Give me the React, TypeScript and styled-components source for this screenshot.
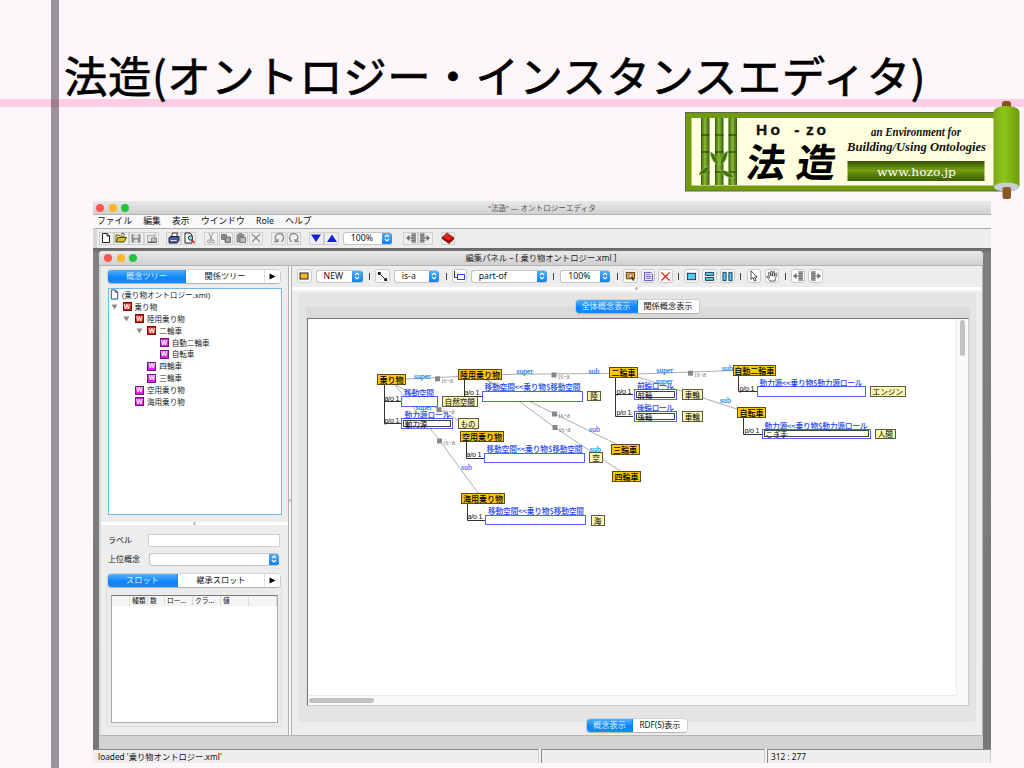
import React from "react";
import styled, { createGlobalStyle, css } from "styled-components";

const ui = `"Noto Sans", "Noto Sans CJK JP", sans-serif`;
const jp = `"Noto Sans CJK JP", sans-serif`;

const Global = createGlobalStyle`
  *, *::before, *::after { box-sizing: border-box; }
  body { margin: 0; background: #fdf6fb; font-family: ${ui}; color: #111; }
  svg { display: block; }
`;

const Slide = styled.main`
  position: relative;
  width: 1024px;
  height: 768px;
  overflow: hidden;
  padding: 44px 0 0 64px;
  background:
    linear-gradient(90deg, transparent 51px, rgba(60, 50, 58, 0.5) 51px, rgba(60, 50, 58, 0.5) 59px, transparent 59px),
    linear-gradient(180deg, transparent 99px, #ffcce6 99px, #ffcce6 107px, transparent 107px),
    #fdf6fb;
`;
const Title = styled.h1`
  margin: 0;
  height: 64px;
  font: 400 43.4px/60px ${jp};
  letter-spacing: 0.62px;
  white-space: nowrap;
  color: #000;
  -webkit-text-stroke: 0.7px #000;
`;
const Banner = styled.div`
  position: absolute;
  left: 684px;
  top: 99px;
`;

/* ---------- outer window ---------- */
const AppWindow = styled.section`
  width: 898px;
  height: 562px;
  margin: 93px 0 0 29px;
  display: flex;
  flex-direction: column;
  background: #eee;
`;
const TitleBar = styled.header<{ $h: number; $inner?: boolean }>`
  height: ${(p) => p.$h}px;
  flex: none;
  display: grid;
  grid-template-columns: 60px 1fr 60px;
  align-items: center;
  padding: 0 ${(p) => (p.$inner ? 5 : 3)}px;
  font: ${(p) => (p.$inner ? 8.3 : 7.6)}px/12px ${ui};
  color: ${(p) => (p.$inner ? "#222" : "#555")};
  text-align: center;
  white-space: nowrap;
  background: linear-gradient(#e9e9e9, #d0d0d0);
  border-bottom: 1px solid #b3b3b3;
`;
const Lights = styled.div`
  display: flex;
  gap: 4.6px;
`;
const Light = styled.i<{ $c: string }>`
  width: 8px;
  height: 8px;
  border-radius: 50%;
  background: ${(p) => p.$c};
`;
const MenuBar = styled.nav`
  height: 13px;
  flex: none;
  display: flex;
  gap: 11.3px;
  padding-left: 4px;
  font: 8.75px/13px ${ui};
  background: #f9f9f9;
  white-space: nowrap;
`;
const MainTools = styled.div`
  height: 20px;
  flex: none;
  display: flex;
  align-items: center;
  padding: 0 0 1px 2px;
  background: #ededed;
  border-top: 1px solid #aaa;
  border-left: 4px solid #d6d6d6;
`;
const Desktop = styled.div`
  flex: 1;
  min-height: 0;
  padding: 3px 8px 0 6px;
  background: linear-gradient(#666, #808080 5px, #777);
`;
const StatusBar = styled.footer`
  height: 14px;
  flex: none;
  display: grid;
  grid-template-columns: 446px 224px 1fr;
  gap: 2px;
  background: #f3f1f2;
`;
const StatusCell = styled.div<{ $line?: boolean }>`
  padding-left: ${(p) => (p.$line ? 3 : 5)}px;
  font: 8.3px/13px ${ui};
  background: #eee;
  border-top: 1px solid #888;
  border-left: ${(p) => (p.$line ? "1px solid #888" : "none")};
  border-right: 1px solid #ccc;
  white-space: nowrap;
`;

/* ---------- controls ---------- */
const ToolButton = styled.span<{ $ml?: number; $flat?: boolean }>`
  width: 14.6px;
  height: ${(p) => (p.$flat ? 13 : 14)}px;
  margin-left: ${(p) => p.$ml || 0}px;
  flex: none;
  display: flex;
  align-items: center;
  justify-content: center;
  ${(p) =>
    p.$flat
      ? css`
          background: #eee;
          border: 1px solid #cfcfcf;
        `
      : css`
          background: #fbfbfb;
          border: 1px solid #cbcbcb;
          border-radius: 3px;
        `}
`;
const SelectBox = styled.span<{ $w: number; $ml?: number; $pad?: number }>`
  width: ${(p) => p.$w}px;
  height: 13px;
  margin-left: ${(p) => p.$ml || 0}px;
  flex: none;
  display: flex;
  align-items: stretch;
  justify-content: space-between;
  padding-left: ${(p) => p.$pad ?? 7}px;
  overflow: hidden;
  font: 8.7px/11px ${ui};
  background: #fff;
  border: 1px solid #c4c4c4;
  border-right: 0;
  border-radius: 3px;
  white-space: nowrap;
`;
const Stepper = styled.span`
  width: 10.5px;
  margin: -1px 0;
  display: flex;
  align-items: center;
  justify-content: center;
  background: linear-gradient(#58b0fc, #0a7dfa);
`;
const Divider = styled.i<{ $ml: number }>`
  width: 1px;
  height: 7px;
  margin-left: ${(p) => p.$ml}px;
  background: #444;
`;
const Tabs = styled.div<{ $w: number }>`
  width: ${(p) => p.$w}px;
  height: 13px;
  flex: none;
  display: flex;
  overflow: hidden;
  background: #fff;
  border-radius: 3px;
  box-shadow: 0 0 0 0.6px #bbb, 0 1px 1px #aaa;
`;
const Tab = styled.span<{ $w: number; $on?: boolean; $fs?: number }>`
  width: ${(p) => p.$w}px;
  flex: none;
  display: flex;
  align-items: center;
  justify-content: center;
  font: ${(p) => p.$fs || 8.2}px/12px ${ui};
  padding-bottom: 1px;
  color: ${(p) => (p.$on ? "#d9efff" : "#111")};
  background: ${(p) => (p.$on ? "linear-gradient(#53b2fb, #0a84fd 60%, #168dff)" : "#fff")};
  border-right: 1px solid ${(p) => (p.$on ? "#0a84fd" : "#ddd")};
  white-space: nowrap;
  &:last-child { border-right: 0; }
`;

/* ---------- inner window ---------- */
const InnerWindow = styled.section`
  height: 498px;
  display: flex;
  flex-direction: column;
  border-radius: 4px 4px 0 0;
  overflow: hidden;
  background: #d2d2d2;
`;
const Body = styled.div`
  height: 470px;
  display: flex;
  background: #ededed;
  border: 1px solid #b5b5b5;
  border-top: 0;
  border-left: 2px solid #d9d9d9;
`;
const Side = styled.aside`
  width: 187px;
  flex: none;
  display: flex;
  flex-direction: column;
  padding: 4px 6px 0 7px;
`;
const Splitter = styled.div`
  width: 4px;
  flex: none;
  display: flex;
  align-items: center;
  border-left: 1px solid #b0b0b0;
  border-right: 1px solid #b0b0b0;
  background: #fafafa;
`;
const Grip = styled.i`
  width: 3px;
  height: 3px;
  border-radius: 50%;
  background: #bbb;
`;
const Tree = styled.ul`
  width: 174px;
  height: 227px;
  margin: 5px 0 0 0;
  padding: 0;
  list-style: none;
  background: #fff;
  border: 1px solid #6ebaf0;
  flex: none;
`;
const TreeRow = styled.li<{ $depth: number }>`
  height: 11.9px;
  padding-left: ${(p) => p.$depth * 12.4}px;
  display: flex;
  align-items: center;
  font: 7.6px/12px ${ui};
  white-space: nowrap;
  color: #222;
`;
const Twisty = styled.span`
  width: 13.5px;
  padding-left: 2px;
  color: #888;
`;
const Badge = styled.span<{ $leaf?: boolean }>`
  width: 9px;
  height: 9px;
  margin-right: 3px;
  display: flex;
  align-items: center;
  justify-content: center;
  font: 700 6.5px/8px ${ui};
  color: #fff;
  background: ${(p) => (p.$leaf ? "#e022e8" : "#ec1c0c")};
  border: 1px solid ${(p) => (p.$leaf ? "#701878" : "#701008")};
`;
const SideRule = styled.div`
  height: 3px;
  margin: 7px -6px 0 -7px;
  display: flex;
  justify-content: center;
  align-items: center;
  flex: none;
  background: #fff;
`;
const Field = styled.label<{ $mt: number }>`
  height: 14px;
  margin-top: ${(p) => p.$mt}px;
  flex: none;
  display: flex;
  align-items: center;
  font: 8px/14px ${ui};
`;
const FieldName = styled.span`
  width: 40px;
  white-space: nowrap;
`;
const TextInput = styled.span`
  width: 132px;
  height: 13px;
  background: #fff;
  border: 1px solid #d0d0d0;
`;
const GroupBox = styled.div`
  width: 176px;
  height: 144px;
  margin: -4px 0 0 -2px;
  padding: 11px 3px 0 4px;
  border: 1px solid #dedede;
  border-radius: 3px;
  background: #ebebeb;
`;
const SlotTabs = styled.div`
  position: relative;
  z-index: 1;
  margin-top: 8px;
`;
const SlotTable = styled.div`
  width: 167px;
  height: 128px;
  background: #fff;
  border: 1px solid #aaa;
  border-top-color: #777;
`;
const SlotHead = styled.div`
  height: 10px;
  display: grid;
  grid-template-columns: 18px 18px 17px 28px 28px 28px 1fr;
  background: #f5f5f5;
  font: 6.8px/10px ${ui};
`;
const HeadCell = styled.span`
  padding-left: 2px;
  border-right: 1px solid #ddd;
  white-space: nowrap;
  overflow: hidden;
`;

const Work = styled.div`
  flex: 1;
  min-width: 0;
  display: flex;
  flex-direction: column;
`;
const PanelTools = styled.div`
  height: 21px;
  flex: none;
  display: flex;
  align-items: center;
  padding: 0 0 1px 5px;
`;
const WhiteRule = styled.div`
  height: 4px;
  margin-top: 0;
  flex: none;
  background: linear-gradient(#fff 2px, #f6f6f6);
  display: flex;
  padding-left: 343px;
`;
const Outer = styled.div`
  height: 429px;
  flex: none;
  margin: 2px 6px 0 6px;
  padding: 7px 6px 0 8px;
  display: flex;
  flex-direction: column;
  align-items: center;
  background: #e4e4e4;
  border-radius: 3px;
`;
const Inset = styled.div`
  width: 664px;
  margin-top: -6px;
  padding: 11px 1px 0 1px;
  background: #dadada;
`;
const TopTabs = styled.div`
  position: relative;
  z-index: 1;
  margin-right: 2px;
`;
const BottomTabs = styled.div`
  align-self: center;
  margin: -3px 0 0 0;
`;
const Viewport = styled.div`
  height: 388px;
  display: grid;
  grid-template-columns: 1fr 12px;
  grid-template-rows: 1fr 10px;
  background: #fafafa;
  border: 1px solid #ccc;
  border-top: 1px solid #777;
  border-left: 1px solid #777;
`;
const Canvas = styled.div`
  position: relative;
  background: #fff;
`;
const ScrollV = styled.div`
  padding: 1px 0 0 3px;
  border-left: 1px solid #ececec;
`;
const ThumbV = styled.i`
  display: block;
  width: 5px;
  height: 36px;
  border-radius: 3px;
  background: #c2c2c2;
`;
const ScrollH = styled.div`
  padding: 2px 0 0 1px;
  border-top: 1px solid #ececec;
`;
const ThumbH = styled.i`
  display: block;
  width: 65px;
  height: 5px;
  border-radius: 3px;
  background: #c2c2c2;
`;

/* ---------- diagram ---------- */
type Kind = "concept" | "slot" | "filler";
const OX = 308;
const OY = 319;
const NodeBox = styled.div<{ $x: number; $y: number; $w: number; $kind: Kind }>`
  position: absolute;
  left: ${(p) => p.$x - OX}px;
  top: ${(p) => p.$y - OY}px;
  width: ${(p) => p.$w}px;
  height: ${(p) => (p.$kind === "concept" ? 11 : 10.5)}px;
  display: flex;
  align-items: center;
  justify-content: center;
  font: ${(p) => (p.$kind === "concept" ? 500 : 400)} ${(p) => (p.$kind === "concept" ? 8 : 7.6)}px/9px ${jp};
  color: #000;
  white-space: nowrap;
  ${(p) => p.$kind === "concept" && css`background: #ffc60a; border: 1px solid #5a4b18;`}
  ${(p) => p.$kind === "slot" && css`background: #fff; border: 1px solid #4a68f5;`}
  ${(p) => p.$kind === "filler" && css`background: #fbf7b4; border: 1px solid #5c5a40;`}
`;
const RoleBox = styled.div`
  flex: 1;
  height: 6.6px;
  margin: 0 1px;
  padding-left: 1px;
  border: 1px solid #444;
  font: 7.4px/5px ${jp};
`;

const concepts: [string, number, number, number][] = [
  ["乗り物", 377, 374, 29],
  ["陸用乗り物", 458, 368.5, 44],
  ["空用乗り物", 460, 430.5, 44],
  ["海用乗り物", 461, 492.5, 44],
  ["二輪車", 609, 367, 29],
  ["三輪車", 610.5, 444, 29],
  ["四輪車", 612, 471, 29],
  ["自動二輪車", 732.5, 364.5, 43.5],
  ["自転車", 737, 407, 29],
];
const slots: [number, number, number, string?][] = [
  [401, 396, 37],
  [401, 418, 52, "動力源"],
  [481.5, 391, 101],
  [483.5, 452.5, 101],
  [485, 514.5, 101],
  [633.5, 389, 43.5, "前輪"],
  [633.5, 411, 43.5, "後輪"],
  [756.5, 386, 109],
  [761.5, 428.5, 109, "こぎ手"],
];
const fillers: [string, number, number, number][] = [
  ["自然空間", 441.5, 396, 36.5],
  ["もの", 457.5, 418, 21],
  ["陸", 587, 390.5, 14],
  ["空", 589, 452, 14],
  ["海", 590.5, 515, 14],
  ["車輪", 681.5, 389, 21.5],
  ["車輪", 681.5, 411, 21.5],
  ["エンジン", 869.5, 386, 36.5],
  ["人間", 874.5, 428.5, 21.5],
];
const edges: number[][] = [
  [406, 379, 458, 376.5],
  [502, 374.5, 609, 373.3],
  [486, 380, 618, 445],
  [488, 380, 516, 399, 555, 427.5, 620, 471],
  [396, 385, 439, 409.5, 478, 431],
  [395, 385, 440, 441, 478, 493],
  [638, 374, 733, 370.5],
  [638, 377, 737, 409],
];
const handles: [number, number][] = [
  [437.5, 378.8], [554, 375], [554.5, 414], [555, 427.5], [439, 409.7], [439.5, 441], [690.5, 373.2],
];
const stems = [
  "M384.5 385V423.5H401M384.5 401.5H401",
  "M464.5 380V396.5H482",
  "M466.5 441V458.5H484",
  "M467.5 504V520.5H485",
  "M615.5 378V416.5H633M615.5 394.5H633",
  "M738.5 375V391.5H757",
  "M743.5 418V434.5H762",
];
const cards: [string, number, number][] = [
  ["a/o 1", 384.5, 400.5], ["p/o 1", 384.5, 422.5], ["a/o 1", 464.5, 395.3], ["a/o 1", 466.5, 457.3],
  ["a/o 1", 467.5, 519.3], ["p/o 1", 616.5, 393.5], ["p/o 1", 616.5, 415.3], ["p/o 1", 739.5, 390.5], ["p/o 1", 744.5, 433],
];
const roleNames: [string, number, number, number][] = [
  ["移動空間", 404, 396, 30],
  ["動力源ロール", 404.5, 418, 46],
  ["移動空間<<乗り物$移動空間", 484.5, 390.3, 96],
  ["移動空間<<乗り物$移動空間", 486.5, 452, 96],
  ["移動空間<<乗り物$移動空間", 488, 514, 96],
  ["前輪ロール", 637, 389, 37],
  ["後輪ロール", 637, 411, 37],
  ["動力源<<乗り物$動力源ロール", 759.5, 386, 103],
  ["動力源<<乗り物$動力源ロール", 764.5, 428.5, 103],
];
const relations: [string, number, number][] = [
  ["super", 414, 379.2], ["super", 516.5, 373.8], ["super", 415.5, 410.3], ["super", 656.5, 372.5], ["super", 656, 383.5],
  ["sub", 588.5, 373.8], ["sub", 461, 469.7], ["sub", 589, 431.7], ["sub", 590, 451.5], ["sub", 722, 371.3], ["sub", 720, 402.8],
];

const Diagram = () => (
  <Canvas>
    <svg width="649" height="376" viewBox="308 319 649 376" style={{ position: "absolute" }}>
      {edges.map((e, i) => (
        <polyline key={i} points={e.join(" ")} fill="none" stroke="#999" strokeWidth="0.8" />
      ))}
    </svg>
    {slots.map(([x, y, w, role], i) => (
      <NodeBox key={i} $x={x} $y={y} $w={w} $kind="slot">{role && <RoleBox>{role}</RoleBox>}</NodeBox>
    ))}
    {concepts.map(([t, x, y, w]) => (
      <NodeBox key={t} $x={x} $y={y} $w={w} $kind="concept">{t}</NodeBox>
    ))}
    {fillers.map(([t, x, y, w], i) => (
      <NodeBox key={i} $x={x} $y={y} $w={w} $kind="filler">{t}</NodeBox>
    ))}
    <svg width="649" height="376" viewBox="308 319 649 376" style={{ position: "absolute" }}>
      {stems.map((d) => (
        <path key={d} d={d} fill="none" stroke="#333" />
      ))}
      {handles.map(([x, y], i) => (
        <g key={i}>
          <rect x={x - 2.5} y={y - 2.5} width="5" height="5" fill="#888" />
          <text x={x + 4} y={y + 4} fontFamily="Liberation Serif" fontSize="7.5" fill="#808080" textLength="11.5">is-a</text>
        </g>
      ))}
      {cards.map(([t, x, y], i) => (
        <text key={i} x={x} y={y} fontFamily="Liberation Sans" fontSize="7.2" fill="#111" textLength="15">{t}</text>
      ))}
      {roleNames.map(([t, x, y, w], i) => (
        <text key={i} x={x} y={y} fontFamily={jp} fontWeight="500" fontSize="7.7" fill="#1c45f0" textLength={w}>{t}</text>
      ))}
      {relations.map(([t, x, y], i) => (
        <text key={i} x={x} y={y} fontFamily="Liberation Serif" fontSize="7.8" fill="#0f7df0" stroke="#0f7df0" strokeWidth=".15" textLength={t === "super" ? 16.5 : 11}>{t}</text>
      ))}
    </svg>
  </Canvas>
);

/* ---------- icons ---------- */
const glyphs: Record<string, React.ReactNode> = {
  page: <path d="M2.500 1.500h4.500L9.500 4v6.500h-7zM7 1.500V4h2.500" fill="#fff" stroke="#222" />,
  open: <><path d="M1 10V3h3l1 1h4v2" fill="#f4e36a" stroke="#6b6412" /><path d="M1 10l2-4.500h8.500L9 10z" fill="#d8c12c" stroke="#4a4510" /><path d="M6 2c2-1.500 3-.5 3.500 1" fill="none" stroke="#333" /></>,
  save: <><path d="M1.500 2h9v8.500h-9z" fill="#8a8a8a" /><path d="M3.500 2h5v4h-5zM4 7.500h4v3H4z" fill="#ddd" /></>,
  saveAs: <><path d="M1.500 3.500h7v6h-7z" fill="#e6e6e6" stroke="#999" strokeWidth=".8" /><path d="M5.500 6h5v4h-5z" fill="#bbb" stroke="#777" strokeWidth=".8" /><path d="M9 1v5" stroke="#aaa" /><path d="M1.500 10.500h9" stroke="#555" /></>,
  print: <><path d="M3.500 5l1-4h5l-1 4z" fill="#fff" stroke="#333" /><path d="M1 5.500l2-1h8v4L9 11H1z" fill="#4f5ba4" stroke="#222" /><path d="M2.500 8.500h6" stroke="#dde" /></>,
  preview: <><path d="M2 1h5l2 2v8H2z" fill="#fff" stroke="#222" /><circle cx="7.500" cy="6" r="2.200" fill="#7be0ee" stroke="#333" /><path d="M9 8l2.500 3" stroke="#d22" strokeWidth="1.600" /></>,
  cut: <><path d="M4 1l3 7M8 1L5 8" fill="none" stroke="#999" /><circle cx="4" cy="9.500" r="1.500" fill="none" stroke="#999" /><circle cx="8" cy="9.500" r="1.500" fill="none" stroke="#999" /></>,
  copy: <><path d="M1.500 2.500h5v5h-5zM5 5h5.500v5.500H5z" fill="#8c8c8c" stroke="#777" /><path d="M6 7h3.500M6 9h3.500" stroke="#ddd" strokeWidth=".6" /></>,
  paste: <><rect x="1.500" y="2" width="8" height="8.500" rx="1" fill="#8c8c8c" /><path d="M4 1.500h3M5 5.500h5.500v5H5z" fill="#bbb" stroke="#777" /></>,
  cross: <path d="M2 2l8 8M10 2l-8 8" stroke="#8e8e8e" strokeWidth="1.300" />,
  undo: <path d="M1 9.500h4V7M4 9C0 5 3 1.500 6.500 1.500c4 0 5.500 5 2 8.500" fill="none" stroke="#8e8e8e" strokeWidth="1.300" />,
  redo: <path d="M11 9.500H7V7M8 9c4-4 1-7.500-2.500-7.500-4 0-5.500 5-2 8.500" fill="none" stroke="#8e8e8e" strokeWidth="1.300" />,
  down: <path d="M1 2.500h10L6 10z" fill="#1024e0" />,
  up: <path d="M1 10h10L6 2.500z" fill="#1024e0" />,
  inL: <><path d="M6.500 1h4.500v10H6.500z" fill="#999" /><path d="M1 6l3.500-3v6z" fill="#6d6d6d" /><path d="M4 6h6M6.500 3.500h4M6.500 8.500h4" fill="none" stroke="#6d6d6d" /></>,
  inR: <><path d="M1 1h4.500v10H1z" fill="#999" /><path d="M11 6L7.500 3v6z" fill="#6d6d6d" /><path d="M2 6h6M1.500 3.500h4M1.500 8.500h4" fill="none" stroke="#6d6d6d" /></>,
  book: <><path d="M.5 5L5 1l6.500 4.500L7 9.500z" fill="#f51b12" stroke="#511" strokeWidth=".7" /><path d="M.5 5v2L7 11.500l4.500-4v-2L7 9.500z" fill="#b30a0a" stroke="#511" strokeWidth=".7" /></>,
  concept: <rect x="2" y="3" width="8" height="6" fill="#fdb62e" stroke="#222" />,
  link: <><path d="M3 3l6 6" stroke="#111" /><path d="M1 1h3v3H1zM8 8h3v3H8z" fill="#111" /></>,
  part: <><path d="M1.500 1v6.500H4" fill="none" stroke="#333" /><rect x="4.500" y="4.500" width="7" height="5" fill="#fff" stroke="#2843ea" /></>,
  find: <><path d="M1.500 1.500h9v7h-9z" fill="#f0a324" stroke="#502f08" /><circle cx="6" cy="5" r="1.900" fill="#d8eef8" stroke="#345" strokeWidth=".7" /><path d="M7.500 6.500L9.500 10.500" stroke="#223" strokeWidth="1.400" /></>,
  note: <><path d="M1.500 1.500h7l2 2v7h-9z" fill="#eef" stroke="#53b" /><path d="M3 4h5M3 6h6M3 8h6" stroke="#53b" strokeWidth=".8" /></>,
  redX: <path d="M1.500 1.500l9 9M10.500 1.500l-9 9" stroke="#f0190f" strokeWidth="1.500" />,
  one: <rect x="1.500" y="2.500" width="9" height="7" fill="#58c5f4" stroke="#134" />,
  rows: <path d="M1.500 1.500h9v3.300h-9zM1.500 7h9v3.300h-9z" fill="#58c5f4" stroke="#134" />,
  cols: <path d="M1 1.500h3.500v9H1zM7.500 1.500H11v9H7.500z" fill="#58c5f4" stroke="#134" />,
  pointer: <path d="M3 .8v8.500l2-1.800 1.500 3.500 1.600-.7L6.600 7h2.600z" fill="#fff" stroke="#222" strokeWidth=".8" />,
  hand: <path d="M4 11L1 7.200c-.6-1 .6-1.400 1.300-.5L3.500 8 2.300 3.300c0-1.200 1.200-1 1.500 0L5 6 4.600 1.800c0-1.200 1.400-1.200 1.500 0L6.500 6l.7-4c.3-1 1.500-.8 1.400.3L8.300 6.500l1.400-3c.5-.8 1.500-.3 1.200.6L9.500 8.500 9 11z" fill="#fff" stroke="#222" strokeWidth=".7" />,
  file: <path d="M2.500 1h4.500l2.500 2.500V11h-7zM7 1v2.500h2.500" fill="#fff" stroke="#24369a" />,
};
const Icon = ({ name, size = 12 }: { name: string; size?: number }) => (
  <svg width={size} height={size} viewBox="0 0 12 12">{glyphs[name]}</svg>
);
const Chevrons = () => (
  <svg width="6" height="8" viewBox="0 0 6 8">
    <path d="M1 3l2-2 2 2M1 5l2 2 2-2" fill="none" stroke="#fff" strokeWidth="1.100" />
  </svg>
);
const Triangle = () => (
  <svg width="7" height="7" viewBox="0 0 7 7"><path d="M.5.500v6l6-3z" fill="#000" /></svg>
);
const Select = ({ text, ...rest }: { text: string; $w: number; $ml?: number; $pad?: number }) => (
  <SelectBox {...rest}><span>{text}</span><Stepper><Chevrons /></Stepper></SelectBox>
);
const TrafficLights = () => (
  <Lights><Light $c="#fc5650" /><Light $c="#fdb425" /><Light $c="#1fc63f" /></Lights>
);

const Bamboo = ({ x }: { x: number }) => (
  <g>
    <rect x={x} y="23" width="8.500" height="67" fill="url(#stalk)" />
    {[40, 57, 77].map((y) => <path key={y} d={`M${x} ${y}h8.500`} stroke="#24430b" strokeWidth="1.200" />)}
  </g>
);
const HozoBanner = () => (
  <svg width="340" height="104" viewBox="0 0 340 104">
    <defs>
      <linearGradient id="stalk"><stop offset="0" stopColor="#2f5a0c" /><stop offset=".45" stopColor="#8dba30" /><stop offset="1" stopColor="#315c10" /></linearGradient>
      <linearGradient id="roll"><stop offset="0" stopColor="#7fa61a" /><stop offset=".4" stopColor="#8cc61a" /><stop offset="1" stopColor="#6b9a08" /></linearGradient>
      <linearGradient id="plate" x2="0" y2="1"><stop offset="0" stopColor="#34500c" /><stop offset=".45" stopColor="#74a010" /><stop offset="1" stopColor="#3b5a0c" /></linearGradient>
    </defs>
    <rect x="1.500" y="13.500" width="316" height="78.500" fill="#719a0d" stroke="#596b45" />
    <rect x="7.500" y="19" width="306" height="67.500" fill="#fffede" />
    <g transform="translate(0 -4)">
      <Bamboo x={17} /><Bamboo x={31} /><Bamboo x={44.500} />
    </g>
    <path d="M26 53c5 1 7 6 9 13-6-2-8-7-9-13zM36 66c1-7 2-12 8-14-1 8-3 12-8 14zM15 76c1-5 6-8 11-9-1 5-4 9-11 9zM36 71c6 0 12 3 14 8-6 0-11-3-14-8z" fill="#3f7612" stroke="#b7cc65" strokeWidth=".6" />
    <text x="72" y="35.500" fontFamily="Liberation Sans" fontWeight="700" fontSize="15.500" fill="#111" stroke="#111" strokeWidth=".3">
      <tspan x="72" textLength="24">Ho</tspan><tspan x="106"> - </tspan><tspan x="122" textLength="20">zo</tspan>
    </text>
    <g fontFamily="Noto Sans CJK JP" fontWeight="700" fontSize="39" transform="skewX(-8)">
      <text x="72" y="78">法</text><text x="122" y="78">造</text>
    </g>
    <g fontFamily="Liberation Serif" fontStyle="italic" fontWeight="700" fill="#111">
      <text x="187" y="37" fontSize="11.500" textLength="90" lengthAdjust="spacingAndGlyphs">an Environment for</text>
      <text x="163" y="51.500" fontSize="12.500" textLength="139" lengthAdjust="spacingAndGlyphs">Building/Using Ontologies</text>
    </g>
    <rect x="163.500" y="62" width="137" height="20" fill="url(#plate)" />
    <text x="193" y="77" fontFamily="DejaVu Serif" fontSize="11.500" textLength="79" lengthAdjust="spacingAndGlyphs" fill="#fff">www.hozo.jp</text>
    <rect x="318" y="2" width="9" height="10" rx="3" fill="#85511f" />
    <path d="M309.500 13c0-8 26-8 26 0v73c0 9-26 9-26 0z" fill="url(#roll)" />
    <ellipse cx="322.500" cy="88" rx="12.500" ry="4.500" fill="#c9ccd0" />
    <rect x="318.500" y="88" width="8.500" height="12" rx="2" fill="#8b572a" />
  </svg>
);

type Row = [number, "open" | "leaf", string];
const rows: Row[] = [
  [0, "open", "乗り物"], [1, "open", "陸用乗り物"], [2, "open", "二輪車"], [3, "leaf", "自動二輪車"], [3, "leaf", "自転車"],
  [2, "leaf", "四輪車"], [2, "leaf", "三輪車"], [1, "leaf", "空用乗り物"], [1, "leaf", "海用乗り物"],
];
const mainTools: [string, number][] = [
  ["page", 0], ["open", 0.5], ["save", 0.5], ["saveAs", 0.5], ["print", 7.5], ["preview", 0.5],
  ["cut", 7.5], ["copy", 0.5], ["paste", 0.5], ["cross", 0.5], ["undo", 8], ["redo", 0.5], ["down", 8], ["up", 0.5],
];

export default function App() {
  return (
    <>
      <Global />
      <Slide>
        <Title>法造(オントロジー・インスタンスエディタ)</Title>
        <Banner><HozoBanner /></Banner>
        <AppWindow>
          <TitleBar $h={14}><TrafficLights /><span>“法造” — オントロジーエディタ</span></TitleBar>
          <MenuBar>
            {["ファイル", "編集", "表示", "ウインドウ", "Role", "ヘルプ"].map((m) => <span key={m}>{m}</span>)}
          </MenuBar>
          <MainTools>
            {mainTools.map(([n, ml]) => <ToolButton key={n} $flat $ml={ml}><Icon name={n} /></ToolButton>)}
            <Select text="100%" $w={49.5} $ml={4} $pad={7} />
            <ToolButton $flat $ml={11}><Icon name="inL" /></ToolButton>
            <ToolButton $flat><Icon name="inR" /></ToolButton>
            <ToolButton $flat $ml={8}><Icon name="book" /></ToolButton>
          </MainTools>
          <Desktop>
            <InnerWindow>
              <TitleBar $h={15} $inner><TrafficLights /><span>編集パネル – [ 乗り物オントロジー.xml ]</span></TitleBar>
              <Body>
                <Side>
                  <Tabs $w={172}>
                    <Tab $w={78} $on>概念ツリー</Tab><Tab $w={79}>関係ツリー</Tab><Tab $w={15}><Triangle /></Tab>
                  </Tabs>
                  <Tree>
                    <TreeRow $depth={0}><Icon name="file" size={11} /><span>&nbsp;(乗り物オントロジー.xml)</span></TreeRow>
                    {rows.map(([d, k, t]) => (
                      <TreeRow key={t} $depth={d}>
                        <Twisty>
                          {k === "open" && <svg width="7" height="6" viewBox="0 0 7 6"><path d="M.5.500h6L3.500 5.500z" fill="#8a8a8a" /></svg>}
                        </Twisty>
                        <Badge $leaf={k === "leaf"}>W</Badge>{t}
                      </TreeRow>
                    ))}
                  </Tree>
                  <SideRule><Grip /></SideRule>
                  <Field $mt={8}><FieldName>ラベル</FieldName><TextInput /></Field>
                  <Field $mt={5}><FieldName>上位概念</FieldName><Select text="" $w={130} $ml={1} /></Field>
                  <SlotTabs>
                    <Tabs $w={172}>
                      <Tab $w={70} $on>スロット</Tab><Tab $w={87}>継承スロット</Tab><Tab $w={15}><Triangle /></Tab>
                    </Tabs>
                  </SlotTabs>
                  <GroupBox>
                    <SlotTable>
                      <SlotHead>
                        {["", "種類", "数", "ロー...", "クラ...", "値", ""].map((h, i) => <HeadCell key={i}>{h}</HeadCell>)}
                      </SlotHead>
                    </SlotTable>
                  </GroupBox>
                </Side>
                <Splitter><Grip /></Splitter>
                <Work>
                  <PanelTools>
                    <ToolButton><Icon name="concept" /></ToolButton>
                    <Select text="NEW" $w={47} $ml={4} />
                    <Divider $ml={6} />
                    <ToolButton $ml={5.5}><Icon name="link" size={11} /></ToolButton>
                    <Select text="is-a" $w={45.5} $ml={4} />
                    <Divider $ml={7} />
                    <ToolButton $ml={5}><Icon name="part" /></ToolButton>
                    <Select text="part-of" $w={76.5} $ml={4} />
                    <Divider $ml={6} />
                    <Select text="100%" $w={50} $ml={6} />
                    <Divider $ml={7} />
                    <ToolButton $ml={5}><Icon name="find" size={11} /></ToolButton>
                    <ToolButton $ml={3}><Icon name="note" size={11} /></ToolButton>
                    <ToolButton $ml={3}><Icon name="redX" size={11} /></ToolButton>
                    <Divider $ml={5} />
                    <ToolButton $ml={5}><Icon name="one" size={11} /></ToolButton>
                    <ToolButton $ml={3.4}><Icon name="rows" size={11} /></ToolButton>
                    <ToolButton $ml={3.4}><Icon name="cols" size={11} /></ToolButton>
                    <Divider $ml={5.5} />
                    <ToolButton $ml={5.5}><Icon name="pointer" /></ToolButton>
                    <ToolButton $ml={3.4}><Icon name="hand" /></ToolButton>
                    <Divider $ml={5.5} />
                    <ToolButton $ml={5}><Icon name="inL" /></ToolButton>
                    <ToolButton $ml={3}><Icon name="inR" /></ToolButton>
                  </PanelTools>
                  <WhiteRule><Grip /></WhiteRule>
                  <Outer>
                    <TopTabs>
                      <Tabs $w={123}><Tab $w={62} $on>全体概念表示</Tab><Tab $w={61}>関係概念表示</Tab></Tabs>
                    </TopTabs>
                    <Inset>
                      <Viewport>
                        <Diagram />
                        <ScrollV><ThumbV /></ScrollV>
                        <ScrollH><ThumbH /></ScrollH>
                      </Viewport>
                    </Inset>
                  </Outer>
                  <BottomTabs>
                    <Tabs $w={100}><Tab $w={46} $on>概念表示</Tab><Tab $w={54}>RDF(S)表示</Tab></Tabs>
                  </BottomTabs>
                </Work>
              </Body>
            </InnerWindow>
          </Desktop>
          <StatusBar>
            <StatusCell>loaded '乗り物オントロジー.xml'</StatusCell>
            <StatusCell $line />
            <StatusCell $line>312 : 277</StatusCell>
          </StatusBar>
        </AppWindow>
      </Slide>
    </>
  );
}
